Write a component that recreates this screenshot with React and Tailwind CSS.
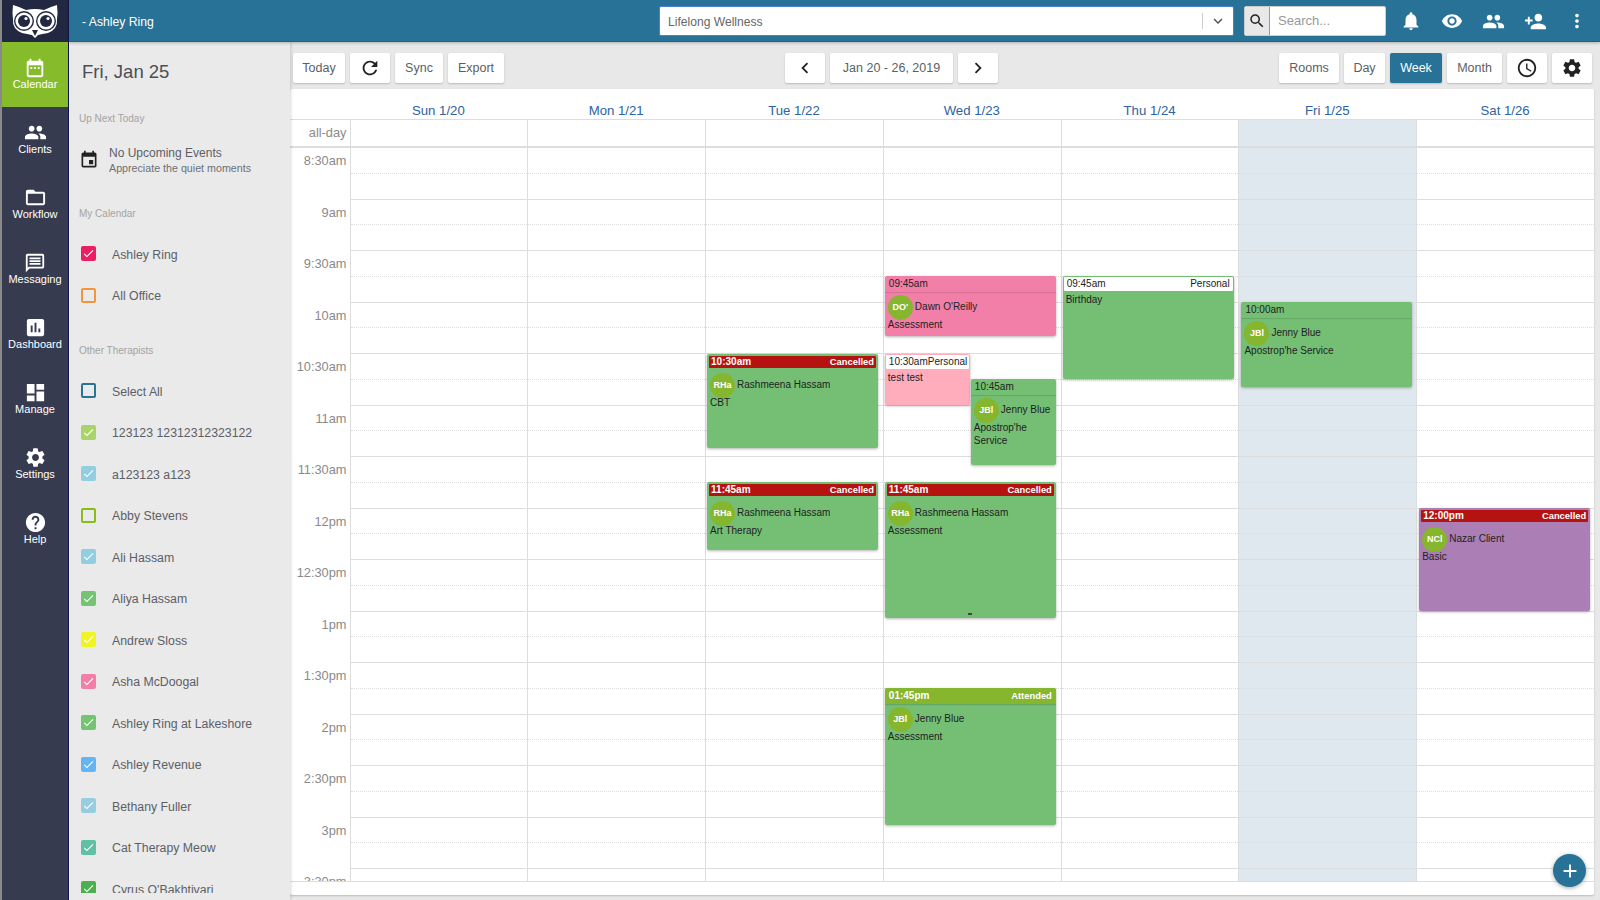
import React from "react";
import {
  MdDateRange,
  MdPeople,
  MdFolderOpen,
  MdOutlineMessage,
  MdAssessment,
  MdDashboard,
  MdSettings,
  MdHelp,
  MdEvent,
  MdNotifications,
  MdVisibility,
  MdPersonAdd,
  MdMoreVert,
  MdSearch,
  MdRefresh,
  MdChevronLeft,
  MdChevronRight,
  MdAccessTime,
  MdAdd,
  MdKeyboardArrowDown,
  MdCheck,
} from "react-icons/md";

const SLOT = 25.75;

const navItems = [
  { label: "Calendar", icon: <MdDateRange size={22} />, active: true },
  { label: "Clients", icon: <MdPeople size={23} /> },
  { label: "Workflow", icon: <MdFolderOpen size={23} /> },
  { label: "Messaging", icon: <MdOutlineMessage size={22} /> },
  { label: "Dashboard", icon: <MdAssessment size={23} /> },
  { label: "Manage", icon: <MdDashboard size={23} /> },
  { label: "Settings", icon: <MdSettings size={23} /> },
  { label: "Help", icon: <MdHelp size={23} /> },
];

const therapists = [
  { name: "Select All", box: "border-2 border-[#2a7396]" },
  { name: "123123 12312312323122", box: "bg-[#a9d46a]", check: true },
  { name: "a123123 a123", box: "bg-[#93cde0]", check: true },
  { name: "Abby Stevens", box: "border-2 border-[#86bc1c]" },
  { name: "Ali Hassam", box: "bg-[#93cde0]", check: true },
  { name: "Aliya Hassam", box: "bg-[#74c474]", check: true },
  { name: "Andrew Sloss", box: "bg-[#eef522]", check: true },
  { name: "Asha McDoogal", box: "bg-[#f27fa8]", check: true },
  { name: "Ashley Ring at Lakeshore", box: "bg-[#74c474]", check: true },
  { name: "Ashley Revenue", box: "bg-[#64b5f6]", check: true },
  { name: "Bethany Fuller", box: "bg-[#96cde0]", check: true },
  { name: "Cat Therapy Meow", box: "bg-[#5fc0a6]", check: true },
  { name: "Cyrus O'Bakhtivari", box: "bg-[#4caf50]", check: true },
];

const days = ["Sun 1/20", "Mon 1/21", "Tue 1/22", "Wed 1/23", "Thu 1/24", "Fri 1/25", "Sat 1/26"];

const times = [
  "8:30am", "9am", "9:30am", "10am", "10:30am", "11am", "11:30am", "12pm",
  "12:30pm", "1pm", "1:30pm", "2pm", "2:30pm", "3pm", "3:30pm",
];

const GREEN = "bg-[#74bf74]";

// mins = minutes after 8:30am, height in px
const events = [
  { day: 2, mins: 120, h: 94, time: "10:30am", kind: "cancelled", tag: "Cancelled", initials: "RHa", name: "Rashmeena Hassam", service: "CBT", color: GREEN },
  { day: 2, mins: 195, h: 68, time: "11:45am", kind: "cancelled", tag: "Cancelled", initials: "RHa", name: "Rashmeena Hassam", service: "Art Therapy", color: GREEN },
  { day: 3, mins: 75, h: 60, time: "09:45am", kind: "plain", initials: "DO'", name: "Dawn O'Reilly", service: "Assessment", color: "bg-[#f27fa8]" },
  { day: 3, mins: 120, h: 51, w: 85, time: "10:30am", kind: "personal", tag: "Personal", service: "test test", color: "bg-[#ffadbc]" },
  { day: 3, mins: 135, h: 86, x: 87, w: 85, time: "10:45am", kind: "plain", initials: "JBl", name: "Jenny Blue", service: "Apostrop'he Service", color: GREEN },
  { day: 3, mins: 195, h: 136, time: "11:45am", kind: "cancelled", tag: "Cancelled", initials: "RHa", name: "Rashmeena Hassam", service: "Assessment", color: GREEN, handle: true },
  { day: 3, mins: 315, h: 137, time: "01:45pm", kind: "attended", tag: "Attended", initials: "JBl", name: "Jenny Blue", service: "Assessment", color: GREEN },
  { day: 4, mins: 75, h: 103, time: "09:45am", kind: "personal", tag: "Personal", service: "Birthday", color: GREEN },
  { day: 5, mins: 90, h: 85, x: 2, time: "10:00am", kind: "plain", initials: "JBl", name: "Jenny Blue", service: "Apostrop'he Service", color: GREEN },
  { day: 6, mins: 210, h: 103, x: 2, time: "12:00pm", kind: "cancelled", tag: "Cancelled", initials: "NCl", name: "Nazar Client", service: "Basic", color: "bg-[#ab7fb5]" },
];

function Owl() {
  return (
    <svg width="46" height="33" viewBox="0 0 46 33">
      <path
        d="M1 0 Q8 2 14 5 Q23 3 32 5 Q38 2 45 0 Q46 8 45 14 Q46 24 36 28 Q30 29 26 30 L23 33 L20 30 Q15 29 10 28 Q0 24 1 14 Q0 8 1 0 Z"
        fill="#fff"
      />
      <circle cx="12" cy="16" r="10" fill="#232842" />
      <circle cx="34" cy="16" r="10" fill="#232842" />
      <circle cx="12" cy="16" r="8.6" fill="#fff" />
      <circle cx="34" cy="16" r="8.6" fill="#fff" />
      <circle cx="12" cy="16" r="6" fill="#232842" />
      <circle cx="34" cy="16" r="6" fill="#232842" />
      <circle cx="14" cy="13.5" r="1.6" fill="#fff" />
      <circle cx="36" cy="13.5" r="1.6" fill="#fff" />
      <path d="M20 25 L26 25 L23 31 Z" fill="#232842" />
    </svg>
  );
}

function Sidebar() {
  return (
    <div className="w-[67px] shrink-0 flex flex-col bg-[#373b50] border-r border-[#12194a]">
      <div className="h-[42px] flex items-center justify-center bg-[#232842]">
        <Owl />
      </div>
      {navItems.map((item) => (
        <div
          key={item.label}
          className={`h-[65px] flex flex-col items-center pt-[14px] text-white text-[11px] leading-[13px] ${
            item.active ? "bg-[#86bc2b]" : ""
          }`}
        >
          <div className="h-[23px] flex items-center justify-center">{item.icon}</div>
          <div className="mt-[-1px]">{item.label}</div>
        </div>
      ))}
    </div>
  );
}

function CheckRow({ name, box, check }) {
  return (
    <div className="h-[41.5px] flex items-center pl-[12px] shrink-0">
      <div className={`w-[15px] h-[15px] mb-[2px] rounded-[2px] flex items-center justify-center text-white ${box}`}>
        {check && <MdCheck size={13} />}
      </div>
      <div className="ml-[16px] text-[12.3px] text-[#5c6066] whitespace-nowrap">{name}</div>
    </div>
  );
}

function LeftPanel() {
  return (
    <div className="w-[221px] shrink-0 h-full bg-[#eaeaea] shadow-[1px_0_3px_rgba(0,0,0,0.15)] z-10">
      <div className="h-[851px] overflow-hidden">
        <div className="h-[60px] flex items-center pl-[13px] text-[18.5px] text-[#4a4f57]">Fri, Jan 25</div>
        <div className="h-[12px] mt-[11px] pl-[10px] text-[10px] leading-[12px] text-[#a3a3a3]">Up Next Today</div>
        <div className="h-[30px] mt-[20px] flex items-center pl-[10px]">
          <MdEvent size={20} className="text-[#222]" />
          <div className="ml-[10px]">
            <div className="text-[12px] leading-[15px] text-[#5c6066]">No Upcoming Events</div>
            <div className="text-[10.7px] leading-[14px] text-[#6c7076]">Appreciate the quiet moments</div>
          </div>
        </div>
        <div className="h-[12px] mt-[33px] pl-[10px] text-[10px] leading-[12px] text-[#a3a3a3]">My Calendar</div>
        <div className="mt-[14px]">
          <CheckRow name="Ashley Ring" box="bg-[#e91e63]" check />
          <CheckRow name="All Office" box="border-2 border-[#f0963c]" />
        </div>
        <div className="h-[12px] mt-[28px] pl-[10px] text-[10px] leading-[12px] text-[#a3a3a3]">Other Therapists</div>
        <div className="mt-[14px]">
          {therapists.map((t) => (
            <CheckRow key={t.name} {...t} />
          ))}
        </div>
      </div>
    </div>
  );
}

function TopBar() {
  return (
    <div className="h-[42px] shrink-0 flex items-center pt-[1px] bg-[#277296] border-b border-[#1c6484] shadow-[0_1px_3px_rgba(0,0,0,0.25)] z-20">
      <div className="pl-[13px] w-[590px] shrink-0 text-white text-[12.2px] pt-[2px]">- Ashley Ring</div>
      <div className="w-[575px] h-[30px] shrink-0 flex items-center bg-white border border-[#4a80d8] rounded-[2px] pl-[8px]">
        <div className="flex-1 text-[12.1px] text-[#666] pt-[2px]">Lifelong Wellness</div>
        <div className="w-px h-[16px] bg-[#ccc]" />
        <div className="w-[30px] flex justify-center text-[#555]">
          <MdKeyboardArrowDown size={18} />
        </div>
      </div>
      <div className="ml-[10px] w-[142px] h-[30px] shrink-0 flex rounded-[2px] overflow-hidden border border-[#ccc] bg-white">
        <div className="w-[25px] flex items-center justify-center bg-[#e8e8e8] border-r border-[#999] text-[#222]">
          <MdSearch size={18} />
        </div>
        <div className="flex-1 flex items-center pl-[8px] text-[13px] text-[#999]">Search...</div>
      </div>
      <div className="flex items-center text-white ml-[4px]">
        <div className="w-[41.6px] flex justify-center"><MdNotifications size={22} /></div>
        <div className="w-[41.6px] flex justify-center"><MdVisibility size={22} /></div>
        <div className="w-[41.6px] flex justify-center"><MdPeople size={23} /></div>
        <div className="w-[41.6px] flex justify-center"><MdPersonAdd size={23} /></div>
        <div className="w-[41.6px] flex justify-center"><MdMoreVert size={22} /></div>
      </div>
    </div>
  );
}

function Btn({ children, w, active }) {
  return (
    <div
      className={`${w} h-[30px] flex items-center justify-center rounded-[2px] shadow-[0_1px_2px_rgba(0,0,0,0.2)] text-[12.5px] ${
        active ? "bg-[#277296] text-white" : "bg-white text-[#5a5f66]"
      }`}
    >
      {children}
    </div>
  );
}

function Toolbar() {
  return (
    <div className="h-[47px] shrink-0 flex items-start justify-between pt-[11px] pl-[3px] pr-[8px]">
      <div className="flex gap-[5px]">
        <Btn w="w-[52px]">Today</Btn>
        <Btn w="w-[40px]"><MdRefresh size={22} className="text-[#222]" /></Btn>
        <Btn w="w-[48px]">Sync</Btn>
        <Btn w="w-[56px]">Export</Btn>
      </div>
      <div className="flex gap-[5px]">
        <Btn w="w-[40px]"><MdChevronLeft size={22} className="text-[#222]" /></Btn>
        <Btn w="w-[123px]">Jan 20 - 26, 2019</Btn>
        <Btn w="w-[40px]"><MdChevronRight size={22} className="text-[#222]" /></Btn>
      </div>
      <div className="flex gap-[5px]">
        <Btn w="w-[60px]">Rooms</Btn>
        <Btn w="w-[41px]">Day</Btn>
        <Btn w="w-[52px]" active>Week</Btn>
        <Btn w="w-[55px]">Month</Btn>
        <Btn w="w-[40px]"><MdAccessTime size={22} className="text-[#222]" /></Btn>
        <Btn w="w-[40px]"><MdSettings size={22} className="text-[#222]" /></Btn>
      </div>
    </div>
  );
}

function EventHeader({ ev }) {
  if (ev.kind === "cancelled") {
    return (
      <div className="h-[16px] p-[2px]">
        <div className="h-[12px] flex items-center justify-between px-[2px] bg-[#b5130f] rounded-[1px] text-white font-bold text-[10px] leading-[12px]">
          <span>{ev.time}</span>
          <span className="text-[9.4px]">{ev.tag}</span>
        </div>
      </div>
    );
  }
  if (ev.kind === "attended") {
    return (
      <div className="h-[16px] flex items-center justify-between px-[4px] bg-[#86b52e] shadow-[0_1px_1px_rgba(0,0,0,0.12)] text-white font-bold text-[10px]">
        <span>{ev.time}</span>
        <span className="text-[9.4px]">{ev.tag}</span>
      </div>
    );
  }
  if (ev.kind === "personal") {
    return (
      <div className="h-[16px] p-[1px]">
        <div className="h-[14px] flex items-center justify-between px-[3px] bg-white rounded-[1px] text-[#222] text-[10px]">
          <span>{ev.time}</span>
          <span>{ev.tag}</span>
        </div>
      </div>
    );
  }
  return (
    <div className="h-[16px] flex items-center px-[4px] shadow-[0_1px_1px_rgba(0,0,0,0.12)] rounded-t-[2px] text-[#222] text-[10px]">
      <span>{ev.time}</span>
    </div>
  );
}

function EventCard({ ev }) {
  return (
    <div
      className={`absolute rounded-[2px] overflow-hidden shadow-[0_1px_3px_rgba(0,0,0,0.3)] text-[#222] text-[10px] leading-[12.5px] ${ev.color}`}
      style={{
        top: Math.floor((ev.mins / 30) * SLOT * 2),
        left: ev.x ?? 1,
        width: ev.w ?? 171,
        height: ev.h,
      }}
    >
      <EventHeader ev={ev} />
      {ev.name && (
        <div className="h-[25px] mt-[3px] flex items-center pl-[3px]">
          <div className="w-[25px] h-[25px] rounded-full bg-[#86b52e] flex items-center justify-center text-white font-bold text-[9px]">
            {ev.initials}
          </div>
          <div className="ml-[2px] whitespace-nowrap">{ev.name}</div>
        </div>
      )}
      <div className={`px-[3px] ${ev.name ? "mt-[-1px]" : "mt-[2px]"}`}>{ev.service}</div>
      {ev.handle && <div className="absolute bottom-[3px] left-[83px] w-[4px] h-[2px] bg-[#444]" />}
    </div>
  );
}

function Slots() {
  return times.flatMap((t) => [
    <div key={t + "a"} className="h-[25.75px] border-b border-dotted border-[#ddd]" />,
    <div key={t + "b"} className="h-[25.75px] border-b border-[#ddd]" />,
  ]);
}

function Calendar() {
  return (
    <div className="relative w-[1304px] h-[806px] bg-white rounded-[2px] shadow-[0_1px_2px_rgba(0,0,0,0.2)]">
      <div className="grid grid-cols-[59.5px_repeat(7,1fr)] h-[31px] border-b border-[#ddd]">
        <div />
        {days.map((d) => (
          <div key={d} className="flex items-end justify-center text-[13.2px] leading-[16px] text-[#2d62a3]">
            {d}
          </div>
        ))}
      </div>
      <div className="grid grid-cols-[59.5px_repeat(7,1fr)] h-[28px] border-b-2 border-[#ddd]">
        <div className="flex items-center justify-end pr-[3px] text-[12.8px] text-[#8a8a8a]">all-day</div>
        {days.map((d, i) => (
          <div key={d} className={`border-l border-[#ddd] ${i === 5 ? "bg-[#dfe8ee]" : ""}`} />
        ))}
      </div>
      <div className="grid grid-cols-[59.5px_repeat(7,1fr)] h-[734px] overflow-hidden border-b border-[#ddd]">
        <div>
          {times.map((t) => (
            <div key={t} className="h-[51.5px] pr-[3px] text-right text-[12.8px] leading-[26px] text-[#8a8a8a]">
              {t}
            </div>
          ))}
        </div>
        {days.map((d, i) => (
          <div key={d} className={`relative border-l border-[#ddd] ${i === 5 ? "bg-[#dfe8ee]" : ""}`}>
            <Slots />
            {events
              .filter((ev) => ev.day === i)
              .map((ev) => (
                <EventCard key={ev.time + ev.service} ev={ev} />
              ))}
          </div>
        ))}
      </div>
      <div className="absolute right-[8px] bottom-[8px] w-[33px] h-[33px] rounded-full bg-[#277296] flex items-center justify-center text-white shadow-[0_1px_4px_rgba(0,0,0,0.35)]">
        <MdAdd size={22} />
      </div>
    </div>
  );
}

export default function App() {
  return (
    <div className="w-[1600px] h-[900px] flex overflow-hidden bg-[#e8e8e8] font-['Liberation_Sans',Arial,sans-serif]">
      <div className="w-[2px] shrink-0 bg-[#8a8a8a]" />
      <Sidebar />
      <div className="flex-1 min-w-0 flex flex-col">
        <TopBar />
        <div className="flex-1 min-h-0 flex">
          <LeftPanel />
          <div className="flex-1 min-w-0 flex flex-col">
            <Toolbar />
            <Calendar />
          </div>
        </div>
      </div>
    </div>
  );
}
